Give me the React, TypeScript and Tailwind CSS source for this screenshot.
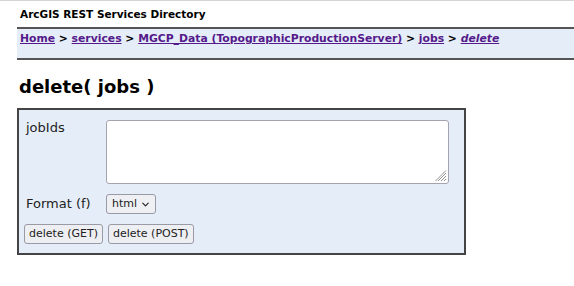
import { ChevronDown } from 'lucide-react';

const font = { fontFamily: '"DejaVu Sans", Verdana, sans-serif' };

export default function App() {
  return (
    <div className="h-[286px] w-[574px] overflow-hidden border-t border-[#d4d4d4] bg-white text-black" style={font}>
      <div className="pl-5 pt-[6px] text-[10.5px] font-bold leading-[14px]">ArcGIS REST Services Directory</div>

      <div className="ml-[17px] mt-[6px] h-[33px] border-y-2 border-[#555] bg-[#e5eef8] pl-[3px] pt-[2px] text-[10.8px] font-bold leading-[16px]">
        <a href="#" className="text-[#551a8b] underline">Home</a>
        {' > '}
        <a href="#" className="text-[#551a8b] underline">services</a>
        {' > '}
        <a href="#" className="text-[#551a8b] underline">MGCP_Data (TopographicProductionServer)</a>
        {' > '}
        <a href="#" className="text-[#551a8b] underline">jobs</a>
        {' > '}
        <a href="#" className="italic text-[#551a8b] underline">delete</a>
      </div>

      <h2 className="ml-[19px] mt-[16px] text-[18px] font-bold leading-[22px]">delete( jobs )</h2>

      <div className="ml-[17px] mt-[10px] w-[449px] border-2 border-[#444] bg-[#e5eef8] pb-[9px] pl-[7px] pt-[10px] text-[13px] text-[#222]">
        <div className="flex">
          <label className="w-[80px] leading-[16px]">jobIds</label>
          <div className="relative h-[64px] w-[343px] rounded-[3px] border border-[#a4a4b0] bg-white">
            <svg className="absolute bottom-[1px] right-[1px]" width="12" height="12" viewBox="0 0 12 12">
              <path d="M11 3 L3 11 M11 6 L6 11 M11 9 L9 11 M11 0.5 L0.5 11" stroke="#888" strokeWidth="0.9" />
            </svg>
          </div>
        </div>

        <div className="mt-[10px] flex items-center">
          <label className="w-[80px] leading-[16px]">Format (f)</label>
          <div className="flex h-[20px] w-[50px] items-center gap-[3px] rounded-[3px] border border-[#9a9aa6] bg-[#eef0f4] pl-[5px] text-[11px]">
            html
            <ChevronDown size={11} strokeWidth={2.5} />
          </div>
        </div>

        <div className="-ml-[2px] mt-[10px] flex gap-[5px] text-[11px]">
          <button className="h-[20px] rounded-[3px] border border-[#9a9aa6] bg-[#eeeff2] px-[4px]">delete (GET)</button>
          <button className="h-[20px] rounded-[3px] border border-[#9a9aa6] bg-[#eeeff2] px-[4px]">delete (POST)</button>
        </div>
      </div>
    </div>
  );
}
